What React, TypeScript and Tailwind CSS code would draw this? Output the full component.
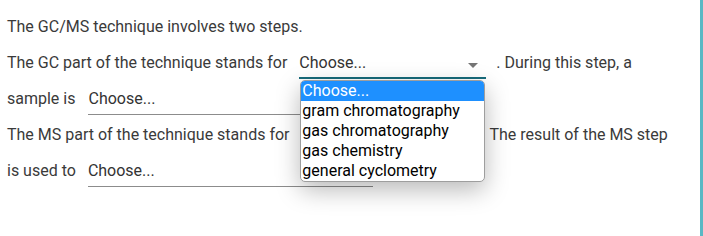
import React from "react";

const options = [
  "Choose...",
  "gram chromatography",
  "gas chromatography",
  "gas chemistry",
  "general cyclometry",
];

function Caret() {
  return (
    <svg width="10" height="5" viewBox="0 0 10 5" className="absolute right-[8px] top-[15px]">
      <path d="M0 0 L10 0 L5 5 Z" fill="#757575" />
    </svg>
  );
}

function Select({ width, focused, open }: { width: string; focused?: boolean; open?: boolean }) {
  return (
    <div className={`relative h-[31px] ${width} shrink-0`}>
      <div className="h-full flex items-center text-[16px] text-[#333]">Choose...</div>
      <Caret />
      <div
        className={
          focused
            ? "absolute left-0 right-0 bottom-0 h-[2px] bg-[#176b7b]"
            : "absolute left-0 right-0 bottom-0 h-px bg-[#8c8c8c]"
        }
      />
      {open && (
        <ul className="absolute z-10 left-[1px] right-[1px] top-[32px] bg-white border border-[#9e9e9e] rounded-[5px] overflow-hidden shadow-[0_8px_24px_rgba(0,0,0,0.28)] text-[16px] leading-[20px] text-black">
          {options.map((o, i) => (
            <li key={o} className={i === 0 ? "bg-[#1e90ff] text-white pl-[1px]" : "pl-[1px]"}>
              {o}
            </li>
          ))}
        </ul>
      )}
    </div>
  );
}

export default function App() {
  return (
    <div
      className="relative w-[703px] h-[236px] bg-white text-[16px] text-[#3a3a3a] overflow-hidden"
      style={{ fontFamily: "Roboto, 'Noto Sans', sans-serif" }}
    >
      <div className="absolute right-0 top-0 h-full w-[3px] bg-[#5ab8c4]" />
      <div className="pt-[9px] pl-[7px]">
        <div className="h-[36px] flex items-center">The GC/MS technique involves two steps.</div>
        <div className="h-[36px] flex items-center">
          <span className="mr-[12px]">The GC part of the technique stands for</span>
          <Select width="w-[187px]" focused open />
          <span className="ml-[10px]">. During this step, a</span>
        </div>
        <div className="h-[36px] flex items-center">
          <span className="mr-[13px]">sample is</span>
          <Select width="w-[287px]" />
        </div>
        <div className="h-[36px] flex items-center">
          <span className="mr-[12px]">The MS part of the technique stands for</span>
          <Select width="w-[178px]" />
          <span className="ml-[10px]">The result of the MS step</span>
        </div>
        <div className="h-[36px] flex items-center">
          <span className="mr-[12px]">is used to</span>
          <Select width="w-[285px]" />
        </div>
      </div>
    </div>
  );
}
